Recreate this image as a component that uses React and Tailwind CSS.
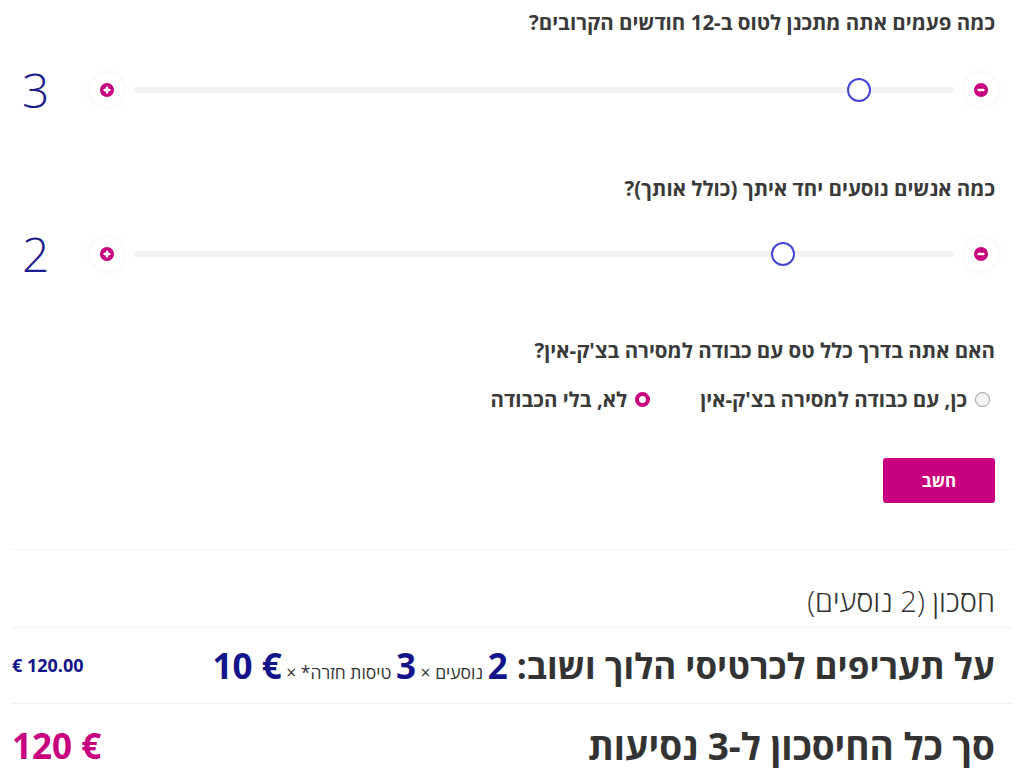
import { useState } from "react"

const font = { fontFamily: '"Open Sans", "Noto Sans", "DejaVu Sans", sans-serif' }

function RoundButton({ sign }) {
  return (
    <button className="flex h-[34px] w-[34px] shrink-0 items-center justify-center rounded-full bg-white shadow-[0_0_6px_rgba(0,0,0,0.06)]">
      <svg width="14" height="14" viewBox="0 0 14 14">
        <circle cx="7" cy="7" r="7" fill="#c8007f" />
        <rect x="3.5" y="5.8" width="7" height="2.4" rx="0.6" fill="#fff" />
        {sign === "plus" && <rect x="5.8" y="3.5" width="2.4" height="7" rx="0.6" fill="#fff" />}
      </svg>
    </button>
  )
}

function Slider({ value, fromRight }) {
  return (
    <div className="flex h-[60px] items-center">
      <div className="flex flex-1 items-center gap-[10px]">
        <RoundButton sign="minus" />
        <div className="relative h-[6px] flex-1 rounded-full bg-[#f1f1f1]">
          <div
            className="absolute top-1/2 h-[24px] w-[24px] -translate-y-1/2 translate-x-1/2 rounded-full border-2 border-[#4545d6] bg-white"
            style={{ right: `${fromRight}%` }}
          />
        </div>
        <RoundButton sign="plus" />
      </div>
      <div className="w-[78px] pl-[10px] text-left text-[48px] font-light leading-none text-[#1c1c8a]">{value}</div>
    </div>
  )
}

function Radio({ checked, label, onSelect }) {
  return (
    <label className="flex cursor-pointer items-center gap-[8px]" onClick={onSelect}>
      <span
        className={
          checked
            ? "h-[15px] w-[15px] rounded-full border-[4px] border-[#c8007f] bg-white"
            : "h-[15px] w-[15px] rounded-full border border-[#9a9a9a] bg-[#f3f3f3]"
        }
      />
      {label}
    </label>
  )
}

export default function App() {
  const [luggage, setLuggage] = useState("no")

  return (
    <div dir="rtl" className="min-h-[768px] bg-white px-3 text-[#333]" style={font}>
      <div className="pr-[14px]">
        <h3 className="pt-[8px] pr-[3px] text-[20.5px] font-bold leading-[28px] text-[#3a3a3a]">כמה פעמים אתה מתכנן לטוס ב-12 חודשים הקרובים?</h3>
        <div className="mt-[24px]">
          <Slider value={3} fromRight={11.6} />
        </div>

        <h3 className="mt-[54px] pr-[3px] text-[20.5px] font-bold leading-[28px] text-[#3a3a3a]">כמה אנשים נוסעים יחד איתך (כולל אותך)?</h3>
        <div className="mt-[22px]">
          <Slider value={2} fromRight={20.8} />
        </div>

        <h3 className="mt-[52px] pr-[3px] text-[20.5px] font-bold leading-[28px] text-[#3a3a3a]">האם אתה בדרך כלל טס עם כבודה למסירה בצ'ק-אין?</h3>
        <div className="mt-[21px] flex items-center gap-[50px] pr-[8px] text-[20.5px] font-bold leading-[28px] text-[#3a3a3a]">
          <Radio checked={luggage === "yes"} label="כן, עם כבודה למסירה בצ'ק-אין" onSelect={() => setLuggage("yes")} />
          <Radio checked={luggage === "no"} label="לא, בלי הכבודה" onSelect={() => setLuggage("no")} />
        </div>

        <button className="mt-[45px] mr-[3px] h-[45px] w-[112px] rounded-[3px] bg-[#c8007f] text-[17px] font-bold text-white">חשב</button>
      </div>

      <div className="mt-[46px] border-t border-[#f2f2f2]" />

      <div className="pr-[17px] pt-[33px] pb-[8px] text-[29px] font-light leading-[36px] text-[#333]">חסכון (2 נוסעים)</div>
      <div className="border-t border-[#f0f0f0]" />

      <div className="flex h-[75px] items-center justify-between">
        <div className="pr-[17px] text-[35px] font-bold leading-none text-[#333]">
          על תעריפים לכרטיסי הלוך ושוב:{" "}
          <span className="text-[#14148a]">2</span>
          <span className="text-[17.5px] font-normal"> נוסעים × </span>
          <span className="text-[#14148a]">3</span>
          <span className="text-[17.5px] font-normal"> טיסות חזרה* × </span>
          <span dir="ltr" className="text-[#14148a]">10 €</span>
        </div>
        <div dir="ltr" className="text-[18px] font-bold text-[#14148a]">€ 120.00</div>
      </div>
      <div className="border-t border-[#f0f0f0]" />

      <div className="flex h-[82px] items-center justify-between">
        <div className="pr-[17px] text-[37px] font-bold leading-none text-[#333]">סך כל החיסכון ל-3 נסיעות</div>
        <div dir="ltr" className="text-[35px] font-bold leading-none text-[#c8007f]">120 €</div>
      </div>
    </div>
  )
}
